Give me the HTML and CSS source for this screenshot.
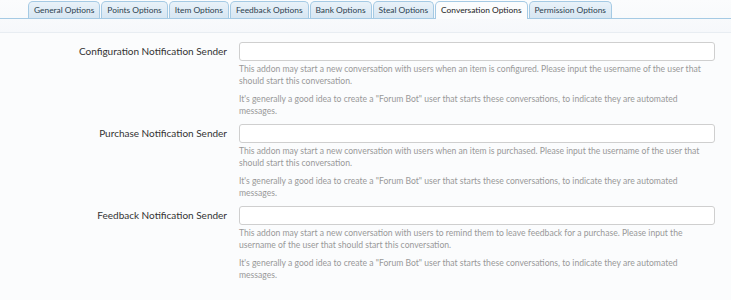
FILE: index.html
```html
<!DOCTYPE html>
<html>
<head>
<meta charset="utf-8">
<link rel="stylesheet" href="styles.css">
</head>
<body>
<div class="tabbar">
  <ul class="tabs">
    <li class="tab">General Options</li>
    <li class="tab">Points Options</li>
    <li class="tab">Item Options</li>
    <li class="tab">Feedback Options</li>
    <li class="tab">Bank Options</li>
    <li class="tab">Steal Options</li>
    <li class="tab active">Conversation Options</li>
    <li class="tab">Permission Options</li>
  </ul>
</div>
<div class="form">
  <div class="row">
    <label class="label">Configuration Notification Sender</label>
    <div class="field">
      <input class="input" type="text">
      <p class="desc">This addon may start a new conversation with users when an item is configured. Please input the username of the user that should start this conversation.</p>
      <p class="desc">It's generally a good idea to create a "Forum Bot" user that starts these conversations, to indicate they are automated messages.</p>
    </div>
  </div>
  <div class="row">
    <label class="label">Purchase Notification Sender</label>
    <div class="field">
      <input class="input" type="text">
      <p class="desc">This addon may start a new conversation with users when an item is purchased. Please input the username of the user that should start this conversation.</p>
      <p class="desc">It's generally a good idea to create a "Forum Bot" user that starts these conversations, to indicate they are automated messages.</p>
    </div>
  </div>
  <div class="row">
    <label class="label">Feedback Notification Sender</label>
    <div class="field">
      <input class="input" type="text">
      <p class="desc">This addon may start a new conversation with users to remind them to leave feedback for a purchase. Please input the username of the user that should start this conversation.</p>
      <p class="desc">It's generally a good idea to create a "Forum Bot" user that starts these conversations, to indicate they are automated messages.</p>
    </div>
  </div>
</div>
</body>
</html>
```
FILE: styles.css
```css
html, body {
  margin: 0;
  padding: 0;
  background: #fbfcfd;
  font-family: Lato, sans-serif;
  color: #333;
}
.tabbar {
  height: 32px;
  border-bottom: 1px solid #e8edf2;
  background: linear-gradient(#fbfcfd, #f6f8fb);
}
.tabs {
  list-style: none;
  margin: 0;
  padding: 1px 0 0 28px;
  display: flex;
  gap: 1px;
  border-bottom: 1px solid #a5cae4;
  height: 17px;
}
.tab {
  flex-shrink: 0;
  white-space: nowrap;
  font-size: 8.4px;
  line-height: 16px;
  padding: 0 5px;
  height: 16px;
  border: 1px solid #a5cae4;
  border-bottom: none;
  border-radius: 5px 5px 0 0;
  background: linear-gradient(#e9f2f9, #d7e6f2);
  color: #2b3e4e;
}
.tab.active {
  background: #fbfcfd;
  height: 17px;
  color: #222;
}
.form {
  padding-top: 9px;
}
.row {
  display: flex;
  height: 82px;
}
.label {
  width: 227px;
  text-align: right;
  font-size: 10px;
  padding-top: 2px;
  line-height: 14px;
  color: #333;
}
.field {
  margin-left: 12px;
  width: 476px;
}
.input {
  display: block;
  box-sizing: border-box;
  width: 476px;
  height: 19px;
  margin: 0;
  border: 1px solid #cfcfcf;
  border-radius: 3px;
  background: #fff;
}
.desc {
  margin: 3px 0 7px;
  font-size: 8.6px;
  line-height: 11.5px;
  color: #999;
}
```
